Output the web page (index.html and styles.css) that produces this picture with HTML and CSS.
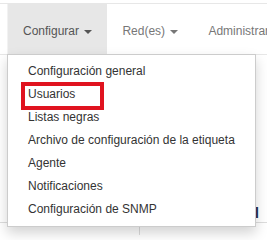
FILE: index.html
```html
<!DOCTYPE html>
<html lang="es">
<head>
  <meta charset="UTF-8" />
  <title>Configurar</title>
  <link rel="stylesheet" href="styles.css">
</head>
<body>
  <div class="page">
    <nav class="navbar">
      <ul class="nav">
        <li class="nav-item open">
          <a href="#">Configurar <span class="caret"></span></a>
          <ul class="dropdown-menu">
            <li><a href="#">Configuración general</a></li>
            <li><a href="#" class="marked">Usuarios</a></li>
            <li><a href="#">Listas negras</a></li>
            <li><a href="#">Archivo de configuración de la etiqueta</a></li>
            <li><a href="#">Agente</a></li>
            <li><a href="#">Notificaciones</a></li>
            <li><a href="#">Configuración de SNMP</a></li>
          </ul>
        </li>
        <li class="nav-item"><a href="#">Red(es) <span class="caret"></span></a></li>
        <li class="nav-item"><a href="#">Administrar</a></li>
      </ul>
    </nav>
    <div class="content">
      <div class="toolbar"><span class="tool">l</span></div>
      <div class="table-row">
        <div class="cell"></div>
        <div class="cell"></div>
      </div>
    </div>
  </div>
</body>
</html>
```

FILE: styles.css
```css
body {
  margin: 0;
  padding: 0;
  font-family: "Liberation Sans", Arial, sans-serif;
  font-size: 12px;
  color: #333;
  background: #fff;
  overflow: hidden;
}
.page {
  padding-top: 3px;
  width: 267px;
  height: 240px;
  overflow: hidden;
}
.navbar {
  border-top: 1px solid #e7e7e7;
  border-bottom: 1px solid #e7e7e7;
  padding-left: 7px;
  background: #fff;
  white-space: nowrap;
}
.nav {
  list-style: none;
  margin: 0;
  padding: 0;
  display: flex;
  border-left: 1px solid #f2f2f2;
}
.nav-item {
  position: relative;
}
.nav-item > a {
  display: block;
  padding: 0 15px;
  height: 50px;
  line-height: 55px;
  color: #777;
  text-decoration: none;
}
.nav-item.open > a {
  background: #e7e7e7;
  color: #555;
}
.caret {
  display: inline-block;
  width: 0;
  height: 0;
  margin-left: 2px;
  vertical-align: middle;
  border-top: 4px solid #777;
  border-left: 4px solid transparent;
  border-right: 4px solid transparent;
}
.nav-item.open .caret {
  border-top-color: #555;
}
.dropdown-menu {
  position: absolute;
  top: 50px;
  left: -1px;
  z-index: 10;
  list-style: none;
  margin: 0;
  padding: 5px 0;
  width: 247px;
  background: #fff;
  border: 1px solid #ccc;
  box-shadow: 0 6px 12px rgba(0, 0, 0, 0.175);
}
.dropdown-menu a {
  display: block;
  padding: 0 20px;
  line-height: 23px;
  color: #333;
  text-decoration: none;
}
.dropdown-menu a.marked {
  position: relative;
}
.dropdown-menu a.marked::after {
  content: "";
  position: absolute;
  left: 13px;
  top: -1px;
  width: 75px;
  height: 20px;
  border: 4px solid #e0131f;
}
.content {
  height: 180px;
  display: flex;
  flex-direction: column;
}
.toolbar {
  display: flex;
  justify-content: flex-end;
  padding: 150px 8px 0 0;
  height: 27px;
}
.tool {
  font-weight: bold;
  font-size: 14px;
  color: #1d2a44;
}
.table-row {
  display: grid;
  grid-template-columns: 139px 1fr;
  border-top: 1px solid #ddd;
  height: 20px;
}
.cell + .cell {
  border-left: 1px solid #ddd;
}
```
